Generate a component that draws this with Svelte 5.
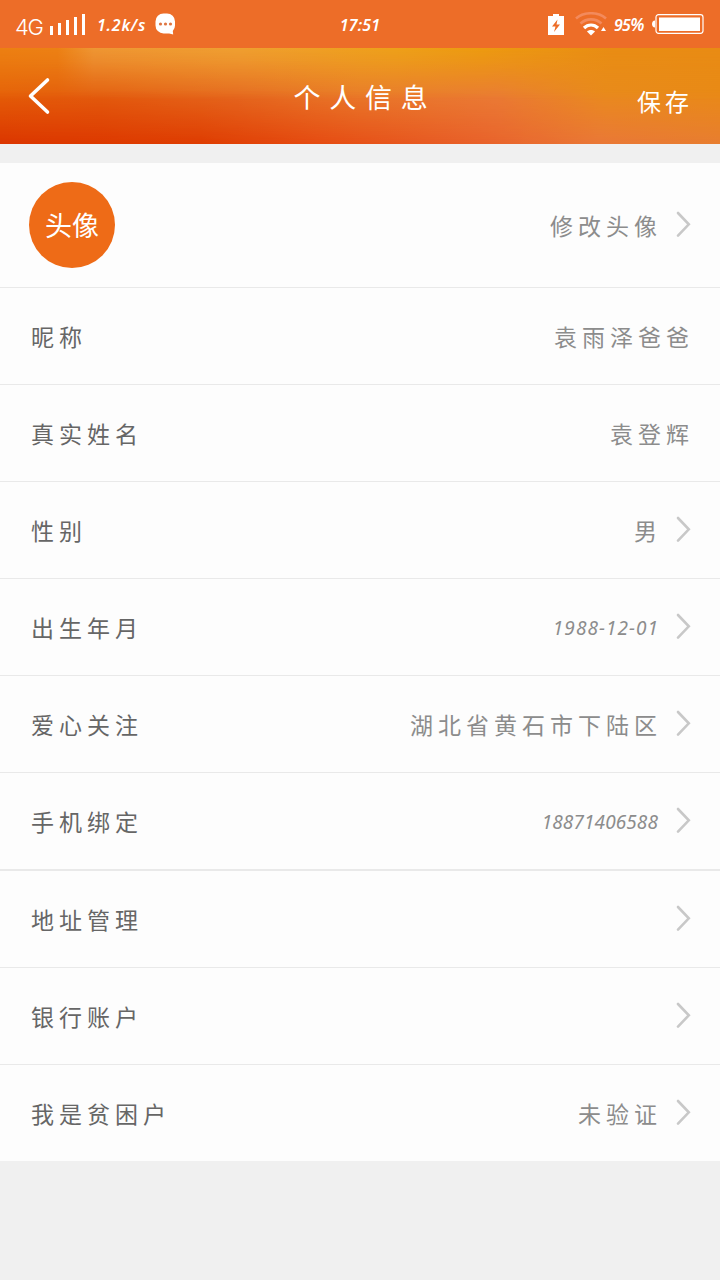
<script>
  const rows = [
    { label: '昵称', value: '袁雨泽爸爸' },
    { label: '真实姓名', value: '袁登辉' },
    { label: '性别', value: '男', arrow: true },
    { label: '出生年月', value: '1988-12-01', arrow: true, kind: 'date' },
    { label: '爱心关注', value: '湖北省黄石市下陆区', arrow: true },
    { label: '手机绑定', value: '18871406588', arrow: true, kind: 'phone' },
    { label: '地址管理', value: '', arrow: true },
    { label: '银行账户', value: '', arrow: true },
    { label: '我是贫困户', value: '未验证', arrow: true }
  ];
</script>

{#snippet chevron()}
  <svg class="chevron" width="18" height="28" viewBox="0 0 18 28">
    <path d="M4 3 14.800 14.300 4 25.600" fill="none" stroke="#c8c8c8" stroke-width="2.6" stroke-linecap="round" />
  </svg>
{/snippet}

<div class="screen">
  <div class="status">
    <div class="side left">
      <span class="net">4G</span>
      <svg class="signal" width="37" height="22" viewBox="0 0 37 22" fill="#fff">
        <rect x="0" y="12" width="3" height="9" /><rect x="8" y="9" width="3" height="12" />
        <rect x="16" y="6" width="3" height="15" /><rect x="24" y="3" width="3" height="18" />
        <rect x="32" y="0" width="3" height="21" />
      </svg>
      <span class="speed">1.2k/s</span>
      <svg class="chat" width="21" height="22" viewBox="0 0 21 22">
        <path d="M8.500.5h3.500a8 8 0 0 1 8 8v4a8 8 0 0 1-2.200 5.500l.4 3.400-4-1H8.500a8 8 0 0 1-8-8V8.500a8 8 0 0 1 8-8Z" fill="#fff" />
        <g fill="#df7541"><circle cx="5.500" cy="11" r="1.600" /><circle cx="10.500" cy="11" r="1.600" /><circle cx="15.500" cy="11" r="1.600" /></g>
      </svg>
    </div>
    <span class="clock">17:51</span>
    <div class="side right">
      <svg class="charge" width="16" height="21" viewBox="0 0 16 21">
        <path d="M0 2h5V0h6v2h5v19H0Z" fill="#fff" /><path d="M9.500 5.500 4 12.500h3.500L6 18l6-7.500H8.500Z" fill="#ed6d28" />
      </svg>
      <svg class="wifi" width="32" height="24" viewBox="0 0 32 24" fill="none">
        <path d="M1 6.500C9-.5 23-.5 31 6.500M5.500 11.500C11.500 6 20.500 6 26.500 11.500" stroke="#f38a5c" stroke-width="2.600" />
        <path d="M9 16c4-4 10-4 14 0" stroke="#fff" stroke-width="3.200" />
        <path d="M12 19.500c2-2 6-2 8 0l-4 4Zm14-.5 2.500-4 2.500 4Z" fill="#fff" />
      </svg>
      <span class="percent">95<i>%</i></span>
      <svg class="battery" width="53" height="20" viewBox="0 0 53 20">
        <path d="M4 6.500v7c-4 0-4-7 0-7Z" fill="#fff" />
        <rect x="5" y=".7" width="47" height="18.600" rx="2.500" fill="none" stroke="#fff" stroke-width="1.200" />
        <rect x="8" y="3.500" width="41" height="13.500" fill="#fff" />
      </svg>
    </div>
  </div>

  <header>
    <svg class="back" width="24" height="40" viewBox="0 0 24 40">
      <path d="M20.500 4 3.500 20l17 16" fill="none" stroke="#fff" stroke-width="3.600" stroke-linecap="round" stroke-linejoin="round" />
    </svg>
    <h1>个人信息</h1>
    <span class="save">保存</span>
  </header>

  <main>
    <div class="row profile">
      <div class="avatar">头像</div>
      <span class="value">修改头像</span>
      {@render chevron()}
    </div>
    {#each rows as row}
      <div class="row {row.kind ?? ''}">
        <span class="label">{row.label}</span>
        <span class="value">{row.value}</span>
        {#if row.arrow}{@render chevron()}{/if}
      </div>
    {/each}
  </main>
</div>

<style>
  :global(body) { margin: 0; background: #f0f0f0; }
  .screen {
    width: 720px;
    height: 1280px;
    background: #f0f0f0;
    font-family: "Noto Sans CJK SC", sans-serif;
    overflow: hidden;
  }
  .status {
    height: 48px;
    background: #ed6d28;
    color: #fff;
    display: grid;
    grid-template-columns: 1fr 42px 1fr;
    align-items: center;
  }
  .side { display: flex; align-items: center; height: 48px; }
  .left { padding-left: 15px; }
  .right { justify-content: flex-end; padding-right: 16px; }
  .net { font: 300 22px/28px Inter, sans-serif; width: 35px; letter-spacing: -1.4px; margin-top: 6px; }
  .signal { margin-top: 1px; }
  .speed { font: italic 600 16px/24px "Noto Sans", sans-serif; letter-spacing: .8px; width: 57px; margin-left: 10px; margin-top: 2px; }
  .chat { margin-left: 1px; }
  .clock { font: italic 600 16px/24px "Noto Sans", sans-serif; letter-spacing: .2px; white-space: nowrap; text-align: center; margin-top: 2px; }
  .charge { margin-right: 11px; margin-top: 1px; }
  .wifi { margin-right: 7px; margin-top: -1px; }
  .percent { font: italic 600 16px/24px "Noto Sans", sans-serif; width: 32px; letter-spacing: -.7px; margin-right: 5px; margin-top: 2px; white-space: nowrap; }
  .percent i { font-size: 17px; }
  header {
    height: 96px;
    display: grid;
    grid-template-columns: 1fr auto 1fr;
    align-items: center;
    color: #fff;
    position: relative;
    isolation: isolate;
    background: linear-gradient(90deg, #dc3600 0, #df3d02 28%, #e64c12 44%, #e9622b 67%, #ea7837 83%, #e87e30 100%);
  }
  /* Colour bands that fade into each other down the header. */
  header::before,
  header::after {
    content: "";
    position: absolute;
    inset: 0;
    z-index: -1;
  }
  header::before {
    background: linear-gradient(90deg, #e56008 0, #e35d0e 14%, #e56920 33%, #e97a2b 50%, #ea7c35 69%, #e98b1c 84%, #e98a16 100%);
    mask-image: linear-gradient(180deg, #000 0, #000 44%, transparent 100%);
  }
  header::after {
    background: linear-gradient(90deg, #ec8012 0, #ec8114 8%, #ee9633 13%, #ef9f30 33%, #eda019 55%, #ec9a10 67%, #e88c14 85%, #e88b14 100%);
    mask-image: linear-gradient(180deg, #000 0, rgba(0, 0, 0, .8) 14%, transparent 54%);
  }
  .back { margin-left: 27px; }
  h1 { margin: 1px 0 0; font-size: 27px; line-height: 40px; font-weight: 400; letter-spacing: 8.700px; padding-left: 10px; }
  .save { justify-self: end; margin-right: 27px; margin-top: 9px; font-size: 24px; line-height: 36px; letter-spacing: 4px; }
  main { margin-top: 19px; background: #fdfdfd; }
  .row {
    height: 97px;
    box-sizing: border-box;
    padding: 0 28px 0 31px;
    display: flex;
    align-items: center;
    border-bottom: 1px solid #e9e9e9;
    font-size: 23px;
    line-height: 36px;
    letter-spacing: 5px;
  }
  .row:last-child { height: 96px; border-bottom: 0; }
  .profile { height: 125px; padding-left: 29px; }
  .phone { height: 98px; border-bottom-width: 2px; }
  .avatar {
    width: 86px;
    height: 86px;
    border-radius: 50%;
    background: #ee6b17;
    color: #fff;
    font-size: 27px;
    line-height: 86px;
    letter-spacing: 0;
    font-weight: 400;
    text-align: center;
    margin-top: -1px;
  }
  .label { color: #666; }
  .value { color: #8c8c8c; margin-left: auto; margin-right: -2px; }
  .value:has(+ .chevron) { margin-right: 12px; }
  .chevron { flex: none; margin-top: -2px; }
  .date .value, .phone .value { font: italic 19px/30px "Noto Sans", sans-serif; letter-spacing: .1px; margin-right: 16px; margin-top: 2px; }
  .date .value { letter-spacing: 1.050px; margin-right: 15px; }
</style>
